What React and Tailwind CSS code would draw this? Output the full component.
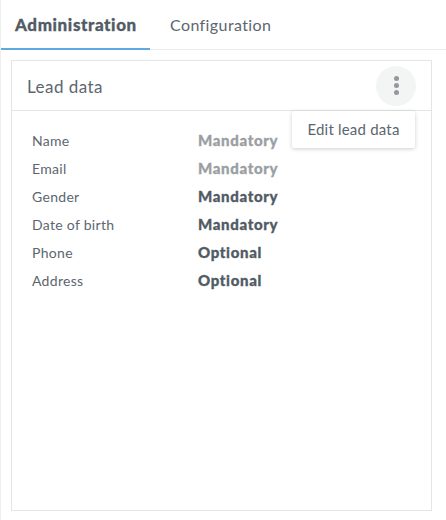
const rows = [
  ["Name", "Mandatory", true],
  ["Email", "Mandatory", true],
  ["Gender", "Mandatory", false],
  ["Date of birth", "Mandatory", false],
  ["Phone", "Optional", false],
  ["Address", "Optional", false],
];

export default function App() {
  return (
    <div className="w-[446px] h-[520px] bg-white border-l border-[#eeeeee] font-['Lato',sans-serif] text-[#5c666f] overflow-hidden">
      <div className="flex h-[50px] border-b border-[#e8ebed]">
        <div className="w-[149px] h-[50px] border-b-2 border-[#5fa8e0] pl-[14px] pt-[13px] text-[17px] leading-[24px] font-black tracking-[0.6px] text-[#515b64] [-webkit-text-stroke:0.3px_#515b64]">
          Administration
        </div>
        <div className="pl-[20px] pt-[13px] text-[16px] leading-[24px] tracking-[0.4px] text-[#5c666f]">Configuration</div>
      </div>
      <div className="relative ml-[10px] mt-[10px] w-[421px] h-[451px] border border-[#e3e5e6]">
        <div className="flex items-center justify-between h-[50px] border-b border-[#e3e5e6] px-[15px]">
          <span className="pt-[2px] text-[17px] leading-[24px] tracking-[0.45px]">Lead data</span>
          <div className="flex flex-col items-center justify-center gap-[2px] w-10 h-10 rounded-full bg-[#f3f4f4]">
            <span className="w-[5px] h-[5px] rounded-full bg-[#94989e]"></span>
            <span className="w-[5px] h-[5px] rounded-full bg-[#94989e]"></span>
            <span className="w-[5px] h-[5px] rounded-full bg-[#94989e]"></span>
          </div>
        </div>
        <div className="flex flex-col pt-[15px] pl-5">
          {rows.map(([label, value, muted]) => (
            <div key={label} className="flex h-7 items-center text-[14px] tracking-[0.3px]">
              <span className="w-[166px]">{label}</span>
              <span
                className={
                  muted
                    ? "text-[15px] tracking-[0.65px] font-black text-[#9b9fa3] [-webkit-text-stroke:0.3px_#9b9fa3]"
                    : "text-[15px] tracking-[0.65px] font-black text-[#515b64] [-webkit-text-stroke:0.3px_#515b64]"
                }
              >
                {value}
              </span>
            </div>
          ))}
        </div>
        <div className="absolute left-[280px] top-[50px] w-[123px] h-[37px] flex items-center justify-center bg-white rounded-[2px] shadow-[0_1px_4px_rgba(0,0,0,0.2)] text-[15px] tracking-[0.2px]">
          Edit lead data
        </div>
      </div>
    </div>
  );
}
